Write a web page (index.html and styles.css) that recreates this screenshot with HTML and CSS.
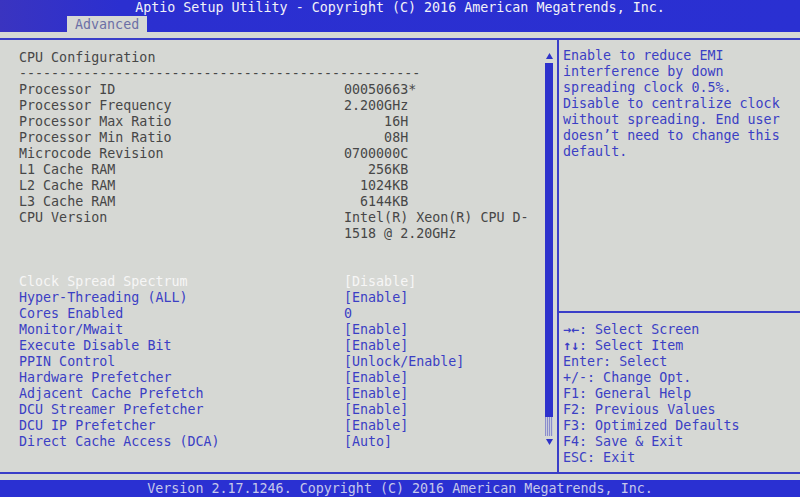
FILE: index.html
```
<!DOCTYPE html>
<html lang="en">
<head>
<meta charset="utf-8">
<title>Aptio Setup Utility</title>
<link rel="stylesheet" href="styles.css">
</head>
<body>
<div class="screen">
  <header class="topbar">
    <div class="title">Aptio Setup Utility - Copyright (C) 2016 American Megatrends, Inc.</div>
    <div class="tabs"><span class="tab">Advanced</span></div>
  </header>
  <main class="frame">
    <section class="left">
      <div class="list">
        <div class="row info">CPU Configuration</div>
        <div class="row info">--------------------------------------------------</div>
        <div class="row info"><span class="lbl">Processor ID</span><span class="val">00050663*</span></div>
        <div class="row info"><span class="lbl">Processor Frequency</span><span class="val">2.200GHz</span></div>
        <div class="row info"><span class="lbl">Processor Max Ratio</span><span class="val">     16H</span></div>
        <div class="row info"><span class="lbl">Processor Min Ratio</span><span class="val">     08H</span></div>
        <div class="row info"><span class="lbl">Microcode Revision</span><span class="val">0700000C</span></div>
        <div class="row info"><span class="lbl">L1 Cache RAM</span><span class="val">   256KB</span></div>
        <div class="row info"><span class="lbl">L2 Cache RAM</span><span class="val">  1024KB</span></div>
        <div class="row info"><span class="lbl">L3 Cache RAM</span><span class="val">  6144KB</span></div>
        <div class="row info"><span class="lbl">CPU Version</span><span class="val">Intel(R) Xeon(R) CPU D-</span></div>
        <div class="row info"><span class="lbl"></span><span class="val">1518 @ 2.20GHz</span></div>
        <div class="row"></div>
        <div class="row"></div>
        <div class="row item selected"><span class="lbl">Clock Spread Spectrum</span><span class="val">[Disable]</span></div>
        <div class="row item"><span class="lbl">Hyper-Threading (ALL)</span><span class="val">[Enable]</span></div>
        <div class="row item"><span class="lbl">Cores Enabled</span><span class="val">0</span></div>
        <div class="row item"><span class="lbl">Monitor/Mwait</span><span class="val">[Enable]</span></div>
        <div class="row item"><span class="lbl">Execute Disable Bit</span><span class="val">[Enable]</span></div>
        <div class="row item"><span class="lbl">PPIN Control</span><span class="val">[Unlock/Enable]</span></div>
        <div class="row item"><span class="lbl">Hardware Prefetcher</span><span class="val">[Enable]</span></div>
        <div class="row item"><span class="lbl">Adjacent Cache Prefetch</span><span class="val">[Enable]</span></div>
        <div class="row item"><span class="lbl">DCU Streamer Prefetcher</span><span class="val">[Enable]</span></div>
        <div class="row item"><span class="lbl">DCU IP Prefetcher</span><span class="val">[Enable]</span></div>
        <div class="row item"><span class="lbl">Direct Cache Access (DCA)</span><span class="val">[Auto]</span></div>
      </div>
      <div class="scroll">
        <div class="arrow up"><svg width="7" height="6" viewBox="0 0 7 6"><polygon points="3.5,0 7,6 0,6"/></svg></div>
        <div class="thumb"></div>
        <div class="track"></div>
        <div class="arrow down"><svg width="7" height="6" viewBox="0 0 7 6"><polygon points="0,0 7,0 3.5,6"/></svg></div>
      </div>
    </section>
    <aside class="help">
      <div class="helptext">
        <div class="row">Enable to reduce EMI</div>
        <div class="row">interference by down</div>
        <div class="row">spreading clock 0.5%.</div>
        <div class="row">Disable to centralize clock</div>
        <div class="row">without spreading. End user</div>
        <div class="row">doesn’t need to change this</div>
        <div class="row">default.</div>
      </div>
      <div class="keys">
        <div class="row"><span class="ar">→←</span>: Select Screen</div>
        <div class="row"><span class="ar">↑↓</span>: Select Item</div>
        <div class="row">Enter: Select</div>
        <div class="row">+/-: Change Opt.</div>
        <div class="row">F1: General Help</div>
        <div class="row">F2: Previous Values</div>
        <div class="row">F3: Optimized Defaults</div>
        <div class="row">F4: Save &amp; Exit</div>
        <div class="row">ESC: Exit</div>
      </div>
    </aside>
  </main>
  <footer class="bottombar">Version 2.17.1246. Copyright (C) 2016 American Megatrends, Inc.</footer>
</div>
</body>
</html>
```
FILE: styles.css
```
* { box-sizing: border-box; }
html, body {
  margin: 0;
  padding: 0;
  background: #d6d8d4;
}
body {
  font-family: "DejaVu Sans Mono", "Liberation Mono", monospace;
  font-size: 13.33px;
  color: #474747;
}
.screen {
  width: 800px;
  height: 497px;
  overflow: hidden;
  display: flex;
  flex-direction: column;
  background: #d6d8d4;
}
.topbar {
  height: 32px;
  background: linear-gradient(90deg, #3a34c0 0%, #2b2fd0 15%, #2a30d2 100%);
  display: flex;
  flex-direction: column;
}
.title {
  height: 16px;
  line-height: 15px;
  text-align: center;
  color: #f2f2f8;
  white-space: pre;
}
.tabs {
  height: 16px;
  display: flex;
}
.tab {
  margin-left: 67px;
  width: 80px;
  height: 16px;
  line-height: 17px;
  padding-left: 8px;
  background: #d6d8d4;
  color: #6c70a6;
}
.frame {
  margin-top: 6px;
  height: 436px;
  border-top: 2px solid #3a3ec8;
  border-bottom: 2px solid #3a3ec8;
  display: flex;
}
.left {
  width: 557px;
  display: flex;
}
.list {
  width: 526px;
  margin-left: 19px;
  padding-top: 10px;
}
.row {
  height: 16px;
  line-height: 16px;
  white-space: pre;
  display: flex;
}
.lbl {
  width: 325px;
  flex: none;
}
.val {
  white-space: pre;
}
.info { color: #474747; }
.item { color: #3b3fc4; }
.item.selected { color: #f6f6f6; }
.scroll {
  width: 8px;
  padding-top: 8px;
  display: flex;
  flex-direction: column;
}
.arrow {
  display: flex;
  justify-content: center;
  align-items: center;
  fill: #2f33c8;
}
.arrow.up { height: 15px; }
.arrow.down { height: 11px; }
.thumb {
  height: 354px;
  background: #2d31cc;
}
.track {
  height: 19px;
  background: repeating-linear-gradient(90deg, #8a8dcc 0 1px, #c9cbdb 1px 2px);
}
.help {
  flex: 1;
  border-left: 2px solid #3a3ec8;
  color: #3b3fc4;
  display: flex;
  flex-direction: column;
}
.helptext {
  height: 273px;
  padding: 8px 0 0 4px;
  border-bottom: 2px solid #3a3ec8;
}
.keys {
  padding: 9px 0 0 4px;
}
.ar {
  width: 16px;
  display: inline-block;
  font-weight: bold;
}
.bottombar {
  margin-top: 6px;
  height: 17px;
  line-height: 18px;
  background: #2a30d2;
  color: #c6c8ea;
  text-align: center;
  white-space: pre;
}
```
